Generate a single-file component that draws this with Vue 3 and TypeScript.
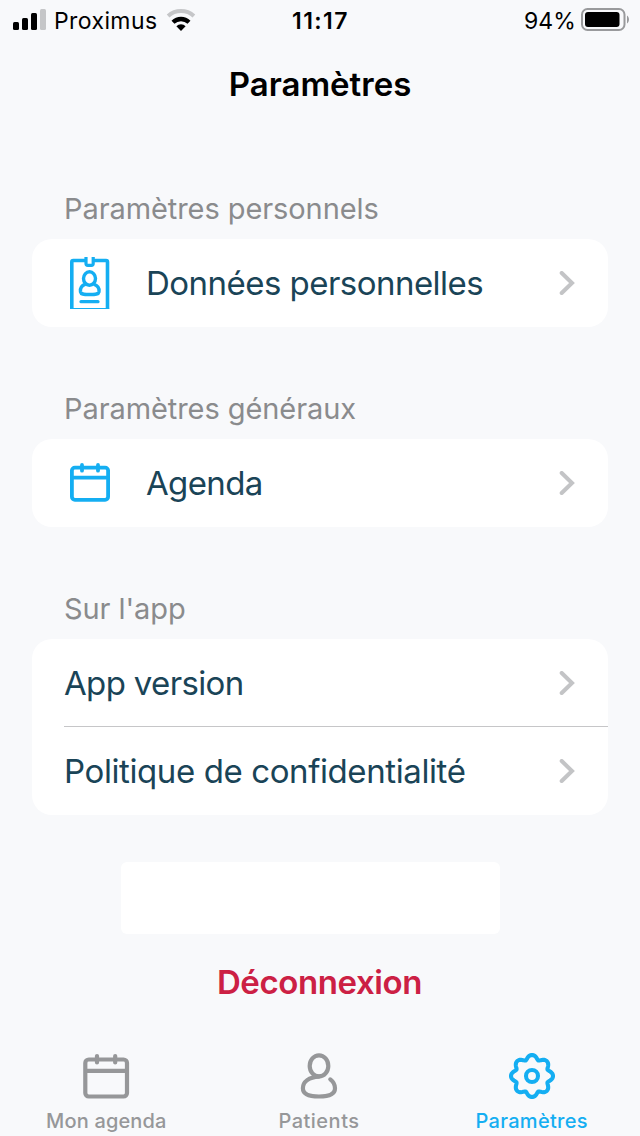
<script setup lang="ts">
type Icon = 'badge' | 'calendar' | null

interface Row {
  label: string
  icon: Icon
  spacing: string
}

interface Section {
  title: string
  rows: Row[]
}

const sections: Section[] = [
  {
    title: 'Paramètres personnels',
    rows: [{ label: 'Données personnelles', icon: 'badge', spacing: 'r-data' }],
  },
  {
    title: 'Paramètres généraux',
    rows: [{ label: 'Agenda', icon: 'calendar', spacing: 'r-agenda' }],
  },
  {
    title: "Sur l'app",
    rows: [
      { label: 'App version', icon: null, spacing: 'r-version' },
      { label: 'Politique de confidentialité', icon: null, spacing: 'r-policy' },
    ],
  },
]

// Eight-lobed gear outline centred on (24, 24).
function gearOutline(): string {
  const points: string[] = []
  for (let i = 0; i < 160; i++) {
    const t = (i / 160) * Math.PI * 2
    const a = t + 0.035 * Math.sin(8 * t)
    const r = 18.9 + 2.1 * Math.cos(8 * t)
    points.push(`${(24 + r * Math.cos(a)).toFixed(2)} ${(24 + r * Math.sin(a)).toFixed(2)}`)
  }
  return `M${points.join('L')}Z`
}

const gear = gearOutline()
</script>

<template>
  <div class="screen">
    <header class="status">
      <div class="status-left">
        <svg class="signal" width="34" height="22" viewBox="0 0 34 22">
          <rect x="0" y="13" width="6" height="8" rx="1.5" />
          <rect x="9" y="9" width="6" height="12" rx="1.5" />
          <rect x="18" y="4" width="6" height="17" rx="1.5" />
          <rect x="27" y="0" width="6" height="21" rx="1.5" fill="#c5c6c8" />
        </svg>
        <span class="carrier">Proximus</span>
        <svg class="wifi" width="30" height="24" viewBox="0 0 30 24" fill="none">
          <path d="M2.100 8A19.300 19.300 0 0 1 27.900 8" stroke="#c5c6c8" stroke-width="4" />
          <path d="M7 14.200A11.600 11.600 0 0 1 23 14.200" stroke="#000" stroke-width="4.300" />
          <path d="M10.400 18.200A6.500 6.500 0 0 1 19.600 18.200L15 23Z" fill="#000" />
        </svg>
      </div>
      <span class="clock">11:17</span>
      <div class="status-right">
        <span class="percent">94%</span>
        <svg class="battery" width="48" height="24" viewBox="0 0 48 24">
          <rect x="1" y="1" width="42.500" height="21" rx="5.500" fill="none" stroke="#999a9c" stroke-width="2" />
          <rect x="4" y="4" width="34.500" height="15" rx="3" />
          <path d="M46 7.500C48.600 9 48.600 14 46 15.500Z" fill="#999a9c" />
        </svg>
      </div>
    </header>

    <h1 class="title">Paramètres</h1>

    <main>
      <section v-for="section in sections" :key="section.title">
        <h2>{{ section.title }}</h2>
        <div class="card">
          <div v-for="row in section.rows" :key="row.label" class="row">
            <div v-if="row.icon" class="row-icon">
              <svg v-if="row.icon === 'badge'" width="40" height="52" viewBox="0 0 40 52" fill="none" stroke="#14aef2" stroke-width="3.600">
                <path d="M16 3.500H3.300Q1.800 3.500 1.800 5V51.500M23 3.500H36Q37.500 3.500 37.500 5V51.500" />
                <path d="M0 51.500H39.300" stroke-width="1" />
                <path d="M16 0V6.500Q16 8.300 17.800 8.300H21.400Q23.200 8.300 23.200 6.500V0" stroke-width="3.200" />
                <ellipse cx="19.500" cy="21.500" rx="6" ry="6.700" stroke-width="3.400" />
                <path d="M15.500 27.200C11.300 28.800 10 31.800 10.500 34.800C11 37.200 13 37.500 19.500 37.500S28.500 37.200 29 34.800C29.500 31.800 28 28.800 23.700 27.200" stroke-width="3.400" />
                <path d="M11 44.700H28" stroke-width="3.200" stroke-linecap="round" />
              </svg>
              <svg v-else width="40" height="40" viewBox="0 0 40 40" fill="none" stroke="#14aef2" stroke-width="3.800" stroke-linecap="round">
                <rect x="1.900" y="4.600" width="36.200" height="32.200" rx="3" />
                <path d="M2 14.700H38M12 2V7.700M28 2V7.700" />
              </svg>
            </div>
            <span class="row-label" :class="row.spacing">{{ row.label }}</span>
            <svg class="chevron" width="16" height="24" viewBox="0 0 16 24" fill="none">
              <path d="M2.700 2L13 12L2.700 22" stroke="#c3c4c6" stroke-width="4" stroke-linecap="round" />
            </svg>
          </div>
        </div>
      </section>
    </main>

    <div class="blank"></div>
    <button class="logout" type="button">Déconnexion</button>

    <nav>
      <div class="tab">
        <svg width="48" height="48" viewBox="0 0 48 48" fill="none" stroke="#969799" stroke-width="4.200" stroke-linecap="round">
          <rect x="3.300" y="7.500" width="41.700" height="37" rx="3.500" />
          <path d="M4 18.800H44M15 4V10.500M33.200 4V10.500" />
        </svg>
        <span class="t-agenda">Mon agenda</span>
      </div>
      <div class="tab">
        <svg width="48" height="48" viewBox="0 0 48 48" fill="none" stroke="#969799" stroke-width="4.200" stroke-linecap="round">
          <ellipse cx="24" cy="13.900" rx="9.300" ry="10.500" />
          <path d="M24 24.600C14 25 7.900 29.800 7.900 36.200C7.900 42.300 14 44.500 24 44.500S40 42.300 40 36.200C40 33 38.300 29.700 35.300 27.400" />
        </svg>
        <span class="t-patients">Patients</span>
      </div>
      <div class="tab active">
        <svg width="48" height="48" viewBox="0 0 48 48" fill="none" stroke="#14aef2" stroke-width="4.100" stroke-linejoin="round">
          <path :d="gear" />
          <circle cx="24" cy="24" r="6" />
        </svg>
        <span class="t-settings">Paramètres</span>
      </div>
    </nav>
  </div>
</template>

<style>
body {
  margin: 0;
  background: #f8f9fb;
}
</style>

<style scoped>
.screen {
  width: 640px;
  height: 1136px;
  display: flex;
  flex-direction: column;
  overflow: hidden;
  background: #f8f9fb;
  font-family: Inter, 'Liberation Sans', sans-serif;
  color: #000;
}
.status {
  height: 40px;
  flex: none;
  display: grid;
  grid-template-columns: 1fr auto 1fr;
  align-items: center;
  font-size: 23px;
  line-height: 28px;
}
.status span {
  padding-top: 2px;
}
.status-left,
.status-right {
  display: flex;
  align-items: center;
}
.status-left {
  padding-left: 13px;
}
.status-right {
  justify-content: flex-end;
  padding-right: 11px;
}
.carrier {
  margin-left: 7px;
  width: 105px;
  letter-spacing: 0.4px;
}
.wifi {
  margin-left: 7px;
}
.clock {
  font-weight: 600;
  letter-spacing: 1.4px;
  margin-right: -1px;
}
.percent {
  margin-right: 5px;
  letter-spacing: 0.1px;
}
.title {
  margin: 0;
  height: 87px;
  flex: none;
  text-align: center;
  font-size: 33px;
  font-weight: 600;
  line-height: 88px;
}
section {
  padding: 0 32px;
}
h2 {
  margin: 0;
  height: 112px;
  padding: 62px 32px 0;
  box-sizing: border-box;
  font-size: 29px;
  font-weight: 400;
  line-height: 40px;
  letter-spacing: -0.08px;
  color: #8a8b8d;
}
.card {
  border-radius: 20px;
  background: #fff;
}
.row {
  height: 88px;
  box-sizing: border-box;
  display: flex;
  align-items: center;
  margin-left: 32px;
  padding-right: 33px;
}
.row + .row {
  border-top: 1px solid #c6c6c8;
  margin-top: -1px;
  height: 89px;
}
.row-icon {
  width: 82px;
  padding-left: 6px;
  box-sizing: border-box;
  display: flex;
}
.row-label {
  flex: 1;
  font-size: 33px;
  line-height: 44px;
  color: #1a4457;
  white-space: nowrap;
}
.r-data {
  letter-spacing: -0.53px;
}
.r-agenda,
.r-version {
  letter-spacing: -0.65px;
}
.r-policy {
  letter-spacing: -0.4px;
}
.blank {
  flex: none;
  width: 379px;
  height: 72px;
  margin: 47px 0 0 121px;
  border-radius: 6px;
  background: #fff;
}
.logout {
  flex: none;
  height: 48px;
  margin-top: 24px;
  padding: 0 1px 0 0;
  border: 0;
  background: none;
  font-family: inherit;
  font-size: 33px;
  font-weight: 600;
  line-height: 48px;
  letter-spacing: -0.4px;
  color: #cc2044;
}
nav {
  width: 638px;
  margin-top: 46px;
  display: grid;
  grid-template-columns: repeat(3, 1fr);
}
.tab {
  display: flex;
  flex-direction: column;
  align-items: center;
  font-size: 20px;
  font-weight: 500;
  line-height: 28px;
  color: #969799;
}
.tab span {
  margin-top: 7px;
}
.t-agenda {
  letter-spacing: 0.15px;
}
.t-patients {
  letter-spacing: 0.5px;
}
.t-settings {
  letter-spacing: 0.3px;
}
.tab.active {
  color: #14aef2;
}
</style>
